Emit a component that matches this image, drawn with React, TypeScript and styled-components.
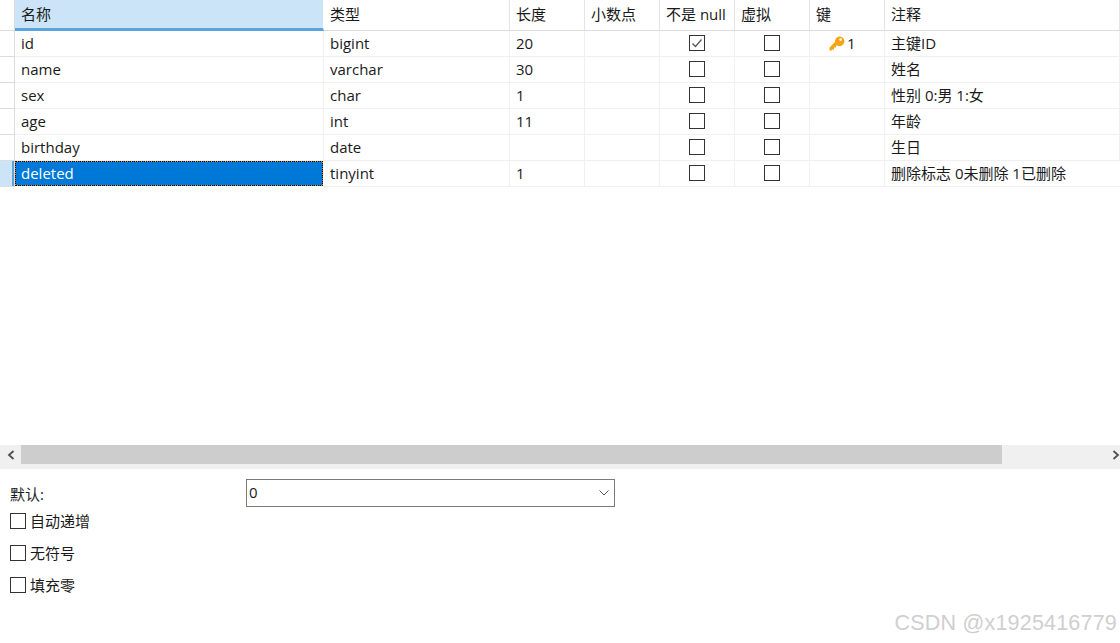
import React from 'react';
import styled, { createGlobalStyle } from 'styled-components';

const GlobalStyle = createGlobalStyle`
    html, body {
        margin: 0;
        padding: 0;
        background: #fff;
    }
    body {
        font-family: "Open Sans", "Noto Sans CJK SC", sans-serif;
        font-size: 15px;
        color: #1a1a1a;
    }
`;

const Page = styled.div`
    position: relative;
    width: 1120px;
    height: 643px;
    overflow: hidden;
    display: flex;
    flex-direction: column;
`;

const TableArea = styled.div`
    height: 445px;
`;

const Grid = styled.div`
    display: grid;
    grid-template-columns: 15px 309px 186px 75px 75px 75px 75px 75px 1fr;
`;

const HeaderCell = styled.div<{ $active?: boolean }>`
    height: 31px;
    box-sizing: border-box;
    padding: 0 0 ${({ $active }) => ($active ? 2 : 4)}px 6px;
    display: flex;
    align-items: center;
    white-space: nowrap;
    background: ${({ $active }) => ($active ? '#cce4f7' : '#fff')};
    border-bottom: ${({ $active }) => ($active ? '3px solid #5aa5de' : '1px solid #dcdcdc')};
    border-right: 1px solid ${({ $active }) => ($active ? '#fff' : '#e4e4e4')};
    &:last-child {
        border-right: none;
    }
`;

const Gutter = styled.div<{ $head?: boolean; $selected?: boolean }>`
    height: ${({ $head }) => ($head ? 31 : 26)}px;
    box-sizing: border-box;
    border-bottom: 1px solid #dcdcdc;
    border-right: 1px solid #dcdcdc;
    background: ${({ $selected }) => ($selected ? 'linear-gradient(90deg, #cce4f7 12px, #5aa5de 12px)' : '#fff')};
`;

const Cell = styled.div<{ $center?: boolean }>`
    height: 26px;
    box-sizing: border-box;
    padding: 0 0 2px ${({ $center }) => ($center ? 0 : 6)}px;
    display: flex;
    align-items: center;
    justify-content: ${({ $center }) => ($center ? 'center' : 'flex-start')};
    white-space: nowrap;
    border-bottom: 1px solid #f0f0f0;
    border-right: 1px solid #f0f0f0;
    &:last-child {
        border-right: none;
    }
`;

const SelectedCell = styled(Cell)`
    background: #0078d7;
    color: #fff;
    padding-left: 5px;
    border: 1px dashed #f08a1d;
    outline: 1px dotted #000;
    outline-offset: -1px;
    height: 25px;
    margin-right: 1px;
    margin-bottom: 1px;
`;

const KeyCell = styled(Cell)`
    padding-left: 19px;
    gap: 2px;
`;

const KeyGlyph = styled.svg`
    margin-top: 2px;
    flex: none;
`;

const Box = styled.span`
    width: 16px;
    height: 16px;
    box-sizing: border-box;
    border: 1px solid #333;
    outline: 0.5px solid #333;
    outline-offset: -1px;
    display: inline-flex;
    align-items: center;
    justify-content: center;
    flex: none;
    background: #fff;
`;

const ScrollBar = styled.div`
    height: 24px;
    background: #f0f0f0;
    display: flex;
    align-items: flex-start;
    justify-content: space-between;
    flex: none;
`;

const ScrollArrow = styled.span`
    width: 21px;
    height: 19px;
    display: flex;
    align-items: center;
    justify-content: center;
    flex: none;
`;

const ScrollArrowEnd = styled(ScrollArrow)`
    width: 13px;
    justify-content: flex-end;
`;

const ScrollThumb = styled.div`
    width: 981px;
    height: 19px;
    background: #cdcdcd;
`;

const ScrollRest = styled.div`
    flex: 1;
`;

const Options = styled.div`
    padding: 10px 0 0 10px;
`;

const DefaultRow = styled.div`
    display: grid;
    grid-template-columns: 236px 369px;
    align-items: center;
    margin-bottom: 6px;
`;

const DefaultLabel = styled.label`
    padding-top: 1px;
`;

const Combo = styled.div`
    height: 28px;
    box-sizing: border-box;
    border: 1px solid #7a7a7a;
    padding: 0 5px 3px 2px;
    display: flex;
    align-items: center;
    justify-content: space-between;
`;

const ComboArrow = styled.svg`
    margin-top: 3px;
`;

const CheckRow = styled.label`
    height: 16px;
    margin-bottom: 16px;
    display: flex;
    align-items: center;
    gap: 4px;
`;

const CheckText = styled.span`
    margin-top: -2px;
`;

const Watermark = styled.div`
    position: absolute;
    right: 3px;
    top: 611px;
    font-family: "Liberation Sans", sans-serif;
    font-size: 21.5px;
    letter-spacing: 0.2px;
    color: #cfcfcf;
    white-space: nowrap;
`;

const headers = ['名称', '类型', '长度', '小数点', '不是 null', '虚拟', '键', '注释'];

const fields = [
    { name: 'id', type: 'bigint', length: '20', notNull: true, key: true, comment: '主键ID' },
    { name: 'name', type: 'varchar', length: '30', comment: '姓名' },
    { name: 'sex', type: 'char', length: '1', comment: '性别 0:男 1:女' },
    { name: 'age', type: 'int', length: '11', comment: '年龄' },
    { name: 'birthday', type: 'date', length: '', comment: '生日' },
    { name: 'deleted', type: 'tinyint', length: '1', comment: '删除标志 0未删除 1已删除', selected: true },
];

const KeyIcon: React.FC = () => (
    <KeyGlyph width="16" height="15" viewBox="0 0 16 15">
        <path
            d="M10.5 0.5a4.8 4.8 0 1 1-1.8 9.2L7 9.6V11.5H5V13.5H3.5L2.5 14.5H0.5V11.5L6 6A4.8 4.8 0 0 1 10.5 0.5z"
            fill="#f5a511"
        />
        <circle cx="11.6" cy="3.6" r="1.3" fill="#fff" />
    </KeyGlyph>
);

const Check: React.FC = () => (
    <svg width="12" height="12" viewBox="0 0 12 12">
        <path d="M1.5 6.5L4.5 9.5L10.5 2.5" fill="none" stroke="#555" strokeWidth="1.2" />
    </svg>
);

const App: React.FC = () => {
    return (
        <Page>
            <GlobalStyle />
            <TableArea>
                <Grid>
                    <Gutter $head />
                    {headers.map((h, i) => (
                        <HeaderCell key={h} $active={i === 0}>{h}</HeaderCell>
                    ))}
                    {fields.map((f) => (
                        <React.Fragment key={f.name}>
                            <Gutter $selected={f.selected} />
                            {f.selected ? <SelectedCell>{f.name}</SelectedCell> : <Cell>{f.name}</Cell>}
                            <Cell>{f.type}</Cell>
                            <Cell>{f.length}</Cell>
                            <Cell />
                            <Cell $center><Box>{f.notNull && <Check />}</Box></Cell>
                            <Cell $center><Box /></Cell>
                            {f.key ? <KeyCell><KeyIcon />1</KeyCell> : <Cell />}
                            <Cell>{f.comment}</Cell>
                        </React.Fragment>
                    ))}
                </Grid>
            </TableArea>
            <ScrollBar>
                <ScrollArrow>
                    <svg width="8" height="10" viewBox="0 0 8 10">
                        <path d="M6.5 1L2 5l4.5 4" fill="none" stroke="#505050" strokeWidth="1.8" />
                    </svg>
                </ScrollArrow>
                <ScrollThumb />
                <ScrollRest />
                <ScrollArrowEnd>
                    <svg width="8" height="10" viewBox="0 0 8 10">
                        <path d="M1.5 1L6 5L1.5 9" fill="none" stroke="#505050" strokeWidth="1.8" />
                    </svg>
                </ScrollArrowEnd>
            </ScrollBar>
            <Options>
                <DefaultRow>
                    <DefaultLabel>默认:</DefaultLabel>
                    <Combo>
                        0
                        <ComboArrow width="10" height="6" viewBox="0 0 10 6">
                            <path d="M0.5 0.5L5 5l4.5-4.5" fill="none" stroke="#555" strokeWidth="1" />
                        </ComboArrow>
                    </Combo>
                </DefaultRow>
                <CheckRow><Box /><CheckText>自动递增</CheckText></CheckRow>
                <CheckRow><Box /><CheckText>无符号</CheckText></CheckRow>
                <CheckRow><Box /><CheckText>填充零</CheckText></CheckRow>
            </Options>
            <Watermark>CSDN @x1925416779</Watermark>
        </Page>
    );
};

export default App;
